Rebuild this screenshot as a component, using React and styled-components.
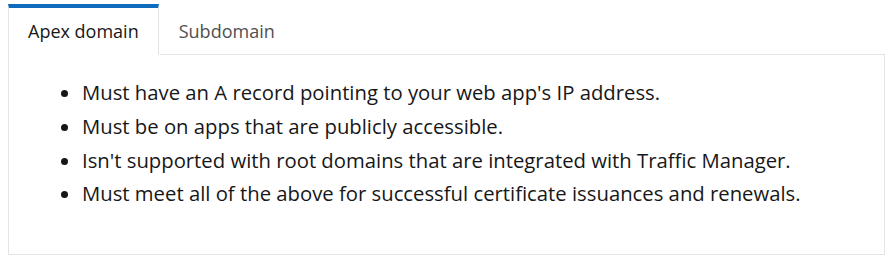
import styled, { createGlobalStyle } from "styled-components";

const GlobalStyle = createGlobalStyle`
  body {
    margin: 0;
    padding: 4px 8px;
    background: #fff;
    font-family: "Open Sans", "Noto Sans", sans-serif;
    color: #171717;
  }
`;

const Tabs = styled.div`
  width: 877px;
`;

const TabList = styled.div`
  display: flex;
  align-items: stretch;
`;

const Tab = styled.button`
  font: inherit;
  font-size: 18px;
  background: #fff;
  height: 51px;
  padding: 0 19px;
  cursor: pointer;
  border: 1px solid ${p => (p.$active ? "#e3e3e3" : "transparent")};
  border-top: 4px solid ${p => (p.$active ? "#0f6cbd" : "transparent")};
  border-bottom: 1px solid ${p => (p.$active ? "#fff" : "#e3e3e3")};
  color: ${p => (p.$active ? "#171717" : "#505050")};
`;

const Filler = styled.div`
  flex: 1;
  border-bottom: 1px solid #e3e3e3;
`;

const Panel = styled.div`
  border: 1px solid #e3e3e3;
  border-top: none;
  height: 200px;
  box-sizing: border-box;
  padding-top: 21px;
`;

const List = styled.ul`
  margin: 0;
  padding-left: 73px;
  font-size: 20.3px;
  line-height: 33.8px;
`;

const items = [
  "Must have an A record pointing to your web app's IP address.",
  "Must be on apps that are publicly accessible.",
  "Isn't supported with root domains that are integrated with Traffic Manager.",
  "Must meet all of the above for successful certificate issuances and renewals.",
];

export default function App() {
  return (
    <>
      <GlobalStyle />
      <Tabs>
        <TabList>
          <Tab $active>Apex domain</Tab>
          <Tab>Subdomain</Tab>
          <Filler />
        </TabList>
        <Panel>
          <List>
            {items.map(t => (
              <li key={t}>{t}</li>
            ))}
          </List>
        </Panel>
      </Tabs>
    </>
  );
}
